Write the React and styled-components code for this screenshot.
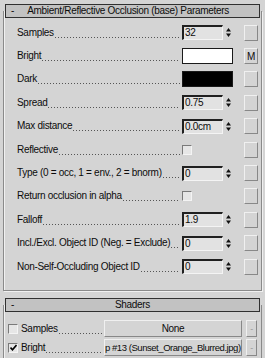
import styled, { createGlobalStyle } from "styled-components";

const GlobalStyle = createGlobalStyle`
  html, body {
    margin: 0;
    padding: 0;
    background: #d4d4d4;
  }
  body {
    font-family: "Liberation Sans", Arial, sans-serif;
    font-size: 10px;
    letter-spacing: -0.3px;
    color: #0c0c0c;
  }
`;

const params = [
  { label: "Samples", kind: "spin", value: "32" },
  { label: "Bright", kind: "color", color: "#ffffff", map: "M" },
  { label: "Dark", kind: "color", color: "#000000" },
  { label: "Spread", kind: "spin", value: "0.75" },
  { label: "Max distance", kind: "spin", value: "0.0cm" },
  { label: "Reflective", kind: "check" },
  { label: "Type (0 = occ, 1 = env., 2 = bnorm)", kind: "spin", value: "0" },
  { label: "Return occlusion in alpha", kind: "check" },
  { label: "Falloff", kind: "spin", value: "1.9" },
  { label: "Incl./Excl. Object ID (Neg. = Exclude)", kind: "spin", value: "0" },
  { label: "Non-Self-Occluding Object ID", kind: "spin", value: "0" },
];

const shaders = [
  { label: "Samples", checked: false, map: "None" },
  { label: "Bright", checked: true, map: "p #13 (Sunset_Orange_Blurred.jpg)", clip: true },
];

const Spinner = ({ value }) => (
  <SpinWrap>
    <SpinField>{value}</SpinField>
    <Arrows>
      <svg width="7" height="11" viewBox="0 0 7 11">
        <path d="M3.5 1 L6 4.5 L1 4.5 Z" fill="#111" />
        <path d="M3.5 10 L6 6.5 L1 6.5 Z" fill="#111" />
      </svg>
    </Arrows>
  </SpinWrap>
);

const Check = ({ checked }) => (
  <CheckBox>
    {checked && (
      <svg width="7" height="7" viewBox="0 0 7 7">
        <path d="M0.5 3.5 L2.5 5.8 L6.5 1" stroke="#000" strokeWidth="1.6" fill="none" />
      </svg>
    )}
  </CheckBox>
);

export default function App() {
  return (
    <>
      <GlobalStyle />
      <Page>
        <Rollout>
          <Header>
            <Minus>-</Minus>
            <Title>Ambient/Reflective Occlusion (base) Parameters</Title>
          </Header>
          <Body>
            {params.map((p) => (
              <Row key={p.label}>
                <Label>{p.label}</Label>
                <Dots />
                <Control>
                  {p.kind === "spin" && <Spinner value={p.value} />}
                  {p.kind === "color" && <Swatch color={p.color} />}
                  {p.kind === "check" && <Check />}
                </Control>
                <SideButton>{p.map || ""}</SideButton>
              </Row>
            ))}
          </Body>
        </Rollout>

        <Rollout $gap>
          <Header>
            <Minus>-</Minus>
            <Title>Shaders</Title>
          </Header>
          <ShaderBody>
            {shaders.map((s) => (
              <ShaderRow key={s.label}>
                <Check checked={s.checked} />
                <ShaderLabel>{s.label}</ShaderLabel>
                <Dots />
                <MapButton $clip={s.clip}>{s.map}</MapButton>
                <SmallButton>-</SmallButton>
              </ShaderRow>
            ))}
          </ShaderBody>
        </Rollout>
      </Page>
    </>
  );
}

const Page = styled.div`
  width: 265px;
  height: 358px;
  overflow: hidden;
  padding: 4px 3px 0 3px;
  box-sizing: border-box;
`;

const Rollout = styled.div`
  margin-top: ${(p) => (p.$gap ? "7px" : "0")};
  display: flex;
  flex-direction: column;
`;

const Header = styled.div`
  position: relative;
  z-index: 1;
  margin: 0 2px;
  height: 14px;
  box-sizing: border-box;
  border: 1px solid #303030;
  background: #c2c2c2;
  display: flex;
  align-items: center;
  line-height: 12px;
`;

const Minus = styled.span`
  width: 30px;
  padding-left: 5px;
  box-sizing: border-box;
`;

const Title = styled.span`
  flex: 1;
  text-align: center;
  padding-right: 30px;
  white-space: nowrap;
`;

const Body = styled.div`
  margin-top: -7px;
  padding: 10px 3px 12px 13px;
  border: 1px solid #8a8a8a;
  border-top: none;
  box-shadow: inset 1px 0 0 #f0f0f0, 1px 1px 0 #f0f0f0;
  display: flex;
  flex-direction: column;
`;

const Row = styled.div`
  height: 23.4px;
  display: flex;
  align-items: center;
`;

const Label = styled.span`
  flex: none;
  white-space: nowrap;
  line-height: 12px;
`;

const Dots = styled.span`
  flex: 1;
  min-width: 4px;
  align-self: center;
  height: 10px;
  margin: 0 2px 0 1px;
  background-image: linear-gradient(to right, #555 1px, transparent 1px);
  background-size: 3px 1px;
  background-repeat: repeat-x;
  background-position: left bottom;
`;

const Control = styled.div`
  flex: none;
  width: 51px;
  display: flex;
  align-items: center;
  margin-right: 11px;
`;

const SpinWrap = styled.div`
  display: flex;
  align-items: center;
  width: 51px;
  height: 15px;
`;

const SpinField = styled.div`
  width: 41px;
  height: 15px;
  box-sizing: border-box;
  border-top: 2px solid #202020;
  border-left: 2px solid #202020;
  border-bottom: 1px solid #f4f4f4;
  border-right: 1px solid #f4f4f4;
  background: #e2e2e2;
  padding-left: 1px;
  line-height: 12px;
`;

const Arrows = styled.div`
  flex: 1;
  display: flex;
  justify-content: center;
  align-items: center;
`;

const Swatch = styled.div`
  width: 51px;
  height: 16px;
  box-sizing: border-box;
  border: 1px solid #1a1a1a;
  background: ${(p) => p.color};
`;

const CheckBox = styled.div`
  width: 10px;
  height: 10px;
  flex: none;
  box-sizing: border-box;
  border-top: 1px solid #7a7a7a;
  border-left: 1px solid #7a7a7a;
  border-right: 1px solid #f4f4f4;
  border-bottom: 1px solid #f4f4f4;
  background: #e6e6e6;
  display: flex;
  align-items: center;
  justify-content: center;
`;

const SideButton = styled.div`
  flex: none;
  width: 14px;
  height: 16px;
  box-sizing: border-box;
  border-top: 1px solid #f0f0f0;
  border-left: 1px solid #f0f0f0;
  border-right: 1px solid #888;
  border-bottom: 1px solid #888;
  background: #d4d4d4;
  display: flex;
  align-items: center;
  justify-content: center;
`;

const ShaderBody = styled.div`
  margin-top: -7px;
  padding: 15px 3px 4px 4px;
  border-left: 1px solid #8a8a8a;
  border-right: 1px solid #8a8a8a;
  box-shadow: inset 1px 0 0 #f0f0f0;
  display: flex;
  flex-direction: column;
  gap: 2px;
`;

const ShaderRow = styled.div`
  height: 17px;
  display: flex;
  align-items: center;
`;

const ShaderLabel = styled.span`
  flex: none;
  margin-left: 3px;
  line-height: 12px;
`;

const MapButton = styled.div`
  flex: none;
  width: 138px;
  height: 17px;
  box-sizing: border-box;
  border-top: 1px solid #f0f0f0;
  border-left: 1px solid #f0f0f0;
  border-right: 1px solid #888;
  border-bottom: 1px solid #888;
  background: #d4d4d4;
  display: flex;
  align-items: center;
  justify-content: ${(p) => (p.$clip ? "flex-start" : "center")};
  font-size: ${(p) => (p.$clip ? "9.5px" : "10px")};
  letter-spacing: ${(p) => (p.$clip ? "-0.45px" : "-0.3px")};
  white-space: nowrap;
  overflow: hidden;
`;

const SmallButton = styled.div`
  flex: none;
  width: 11px;
  height: 17px;
  margin-left: 4px;
  margin-right: 1px;
  box-sizing: border-box;
  border-top: 1px solid #f0f0f0;
  border-left: 1px solid #f0f0f0;
  border-right: 1px solid #888;
  border-bottom: 1px solid #888;
  color: #999;
  font-size: 9px;
  overflow: hidden;
  display: flex;
  align-items: center;
  justify-content: center;
`;
